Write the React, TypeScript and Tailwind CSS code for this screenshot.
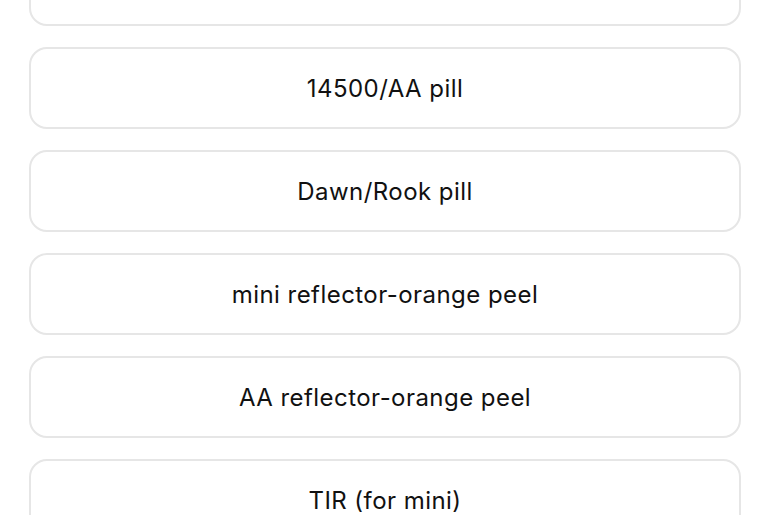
import React from "react";

const items = [
  "",
  "14500/AA pill",
  "Dawn/Rook pill",
  "mini reflector-orange peel",
  "AA reflector-orange peel",
  "TIR (for mini)",
];

export default function App() {
  return (
    <div className="h-[515px] overflow-hidden bg-white">
      <div className="mt-[-56px] flex flex-col gap-[21px] px-[29px]">
        {items.map((t, i) => (
          <button
            key={i}
            className="flex h-[82px] w-full items-center justify-center rounded-[18px] border-2 border-[#e6e6e6] bg-white pt-[2px] text-[24px] tracking-[0.45px] text-[#111111]"
            style={{ fontFamily: "Inter, 'Noto Sans', sans-serif" }}
          >
            {t}
          </button>
        ))}
      </div>
    </div>
  );
}
